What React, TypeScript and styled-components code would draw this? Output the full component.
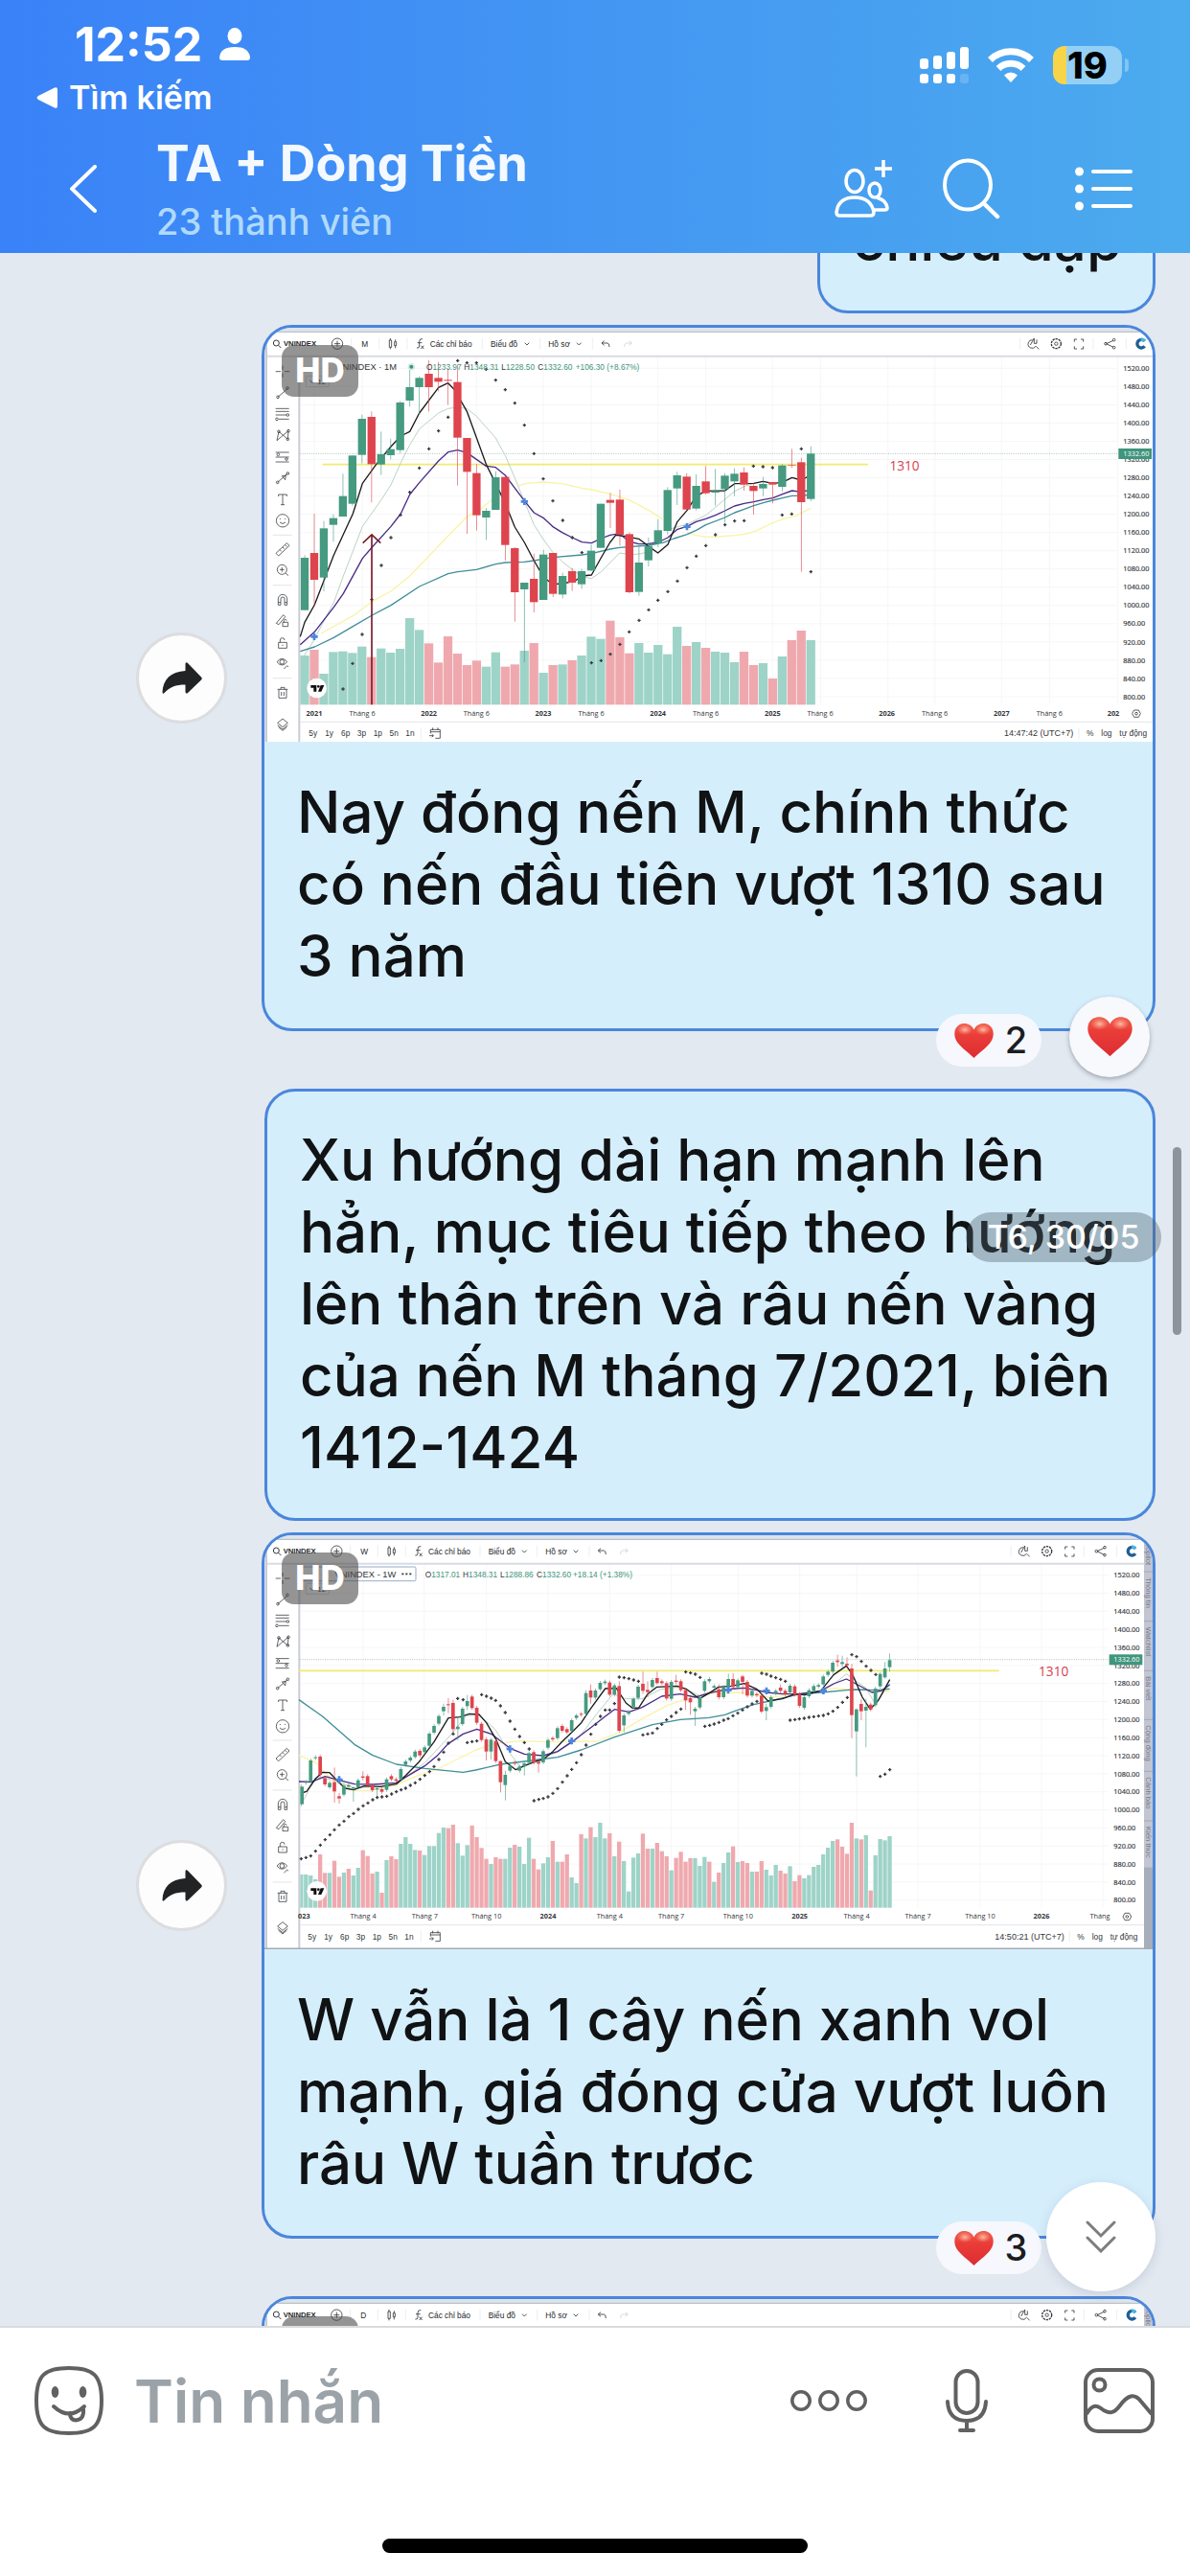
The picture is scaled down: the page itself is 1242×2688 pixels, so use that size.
import React, { useLayoutEffect, useRef } from 'react';
import styled, { createGlobalStyle } from 'styled-components';

const GlobalStyle = createGlobalStyle`
  *, *::before, *::after { box-sizing: border-box; }
  html, body { margin: 0; padding: 0; height: 100%; }
  body { font-family: Inter, "Noto Sans", sans-serif; background: #fff; }
  button { border: 0; padding: 0; margin: 0; background: none; font: inherit; color: inherit; cursor: pointer; display: flex; align-items: center; justify-content: center; }
  svg { display: block; }
`;

/* ---------- shell ---------- */

const Phone = styled.div`
  display: flex;
  flex-direction: column;
  height: 100vh;
  overflow: hidden;
`;

const Header = styled.header`
  flex: none;
  padding: 18px 0 9px;
  color: #fff;
  background: linear-gradient(90deg, #3a82f8 0%, #4498f2 55%, #4cabee 100%);
`;

const StatusBar = styled.div`
  display: flex;
  align-items: flex-start;
  justify-content: space-between;
  padding: 0 64px 0 38px;
`;

const StatusLeft = styled.div`
  display: flex;
  flex-direction: column;
  gap: 8px;
`;

const Clock = styled.div`
  display: flex;
  align-items: center;
  gap: 18px;
  padding-left: 40px;
  font-size: 50px;
  line-height: 56px;
  font-weight: 700;
`;

const BackToApp = styled.a`
  display: flex;
  align-items: center;
  gap: 12px;
  color: #fff;
  text-decoration: none;
  font-size: 34px;
  line-height: 40px;
  font-weight: 600;
`;

const StatusRight = styled.div`
  display: flex;
  align-items: center;
  height: 100px;
  gap: 20px;
`;

const BatteryGroup = styled.div`
  display: flex;
  align-items: center;
  gap: 3px;
`;

const Battery = styled.div`
  width: 72px;
  height: 40px;
  border-radius: 12px;
  background: linear-gradient(90deg, #f7d448 0 20%, #94d0f5 20% 100%);
  color: #000;
  font-size: 38px;
  line-height: 40px;
  font-weight: 800;
  text-align: center;
`;

const BatteryNub = styled.div`
  width: 4px;
  height: 14px;
  border-radius: 0 6px 6px 0;
  background: #82c4f4;
`;

const NavRow = styled.div`
  display: flex;
  align-items: center;
  margin-top: 17px;
  padding: 0 60px 0 73px;
`;

const TitleBlock = styled.div`
  flex: 1;
  min-width: 0;
  display: flex;
  flex-direction: column;
  gap: 4px;
  margin-left: 62px;
`;

const Title = styled.h1`
  margin: 0;
  font-size: 52px;
  line-height: 64px;
  font-weight: 700;
  color: #f3f9ff;
  white-space: nowrap;
`;

const Subtitle = styled.div`
  font-size: 38px;
  line-height: 48px;
  font-weight: 500;
  color: #b0dafc;
`;

const NavButton = styled.button<{ $gap?: number }>`
  margin-left: ${(p) => p.$gap ?? 0}px;
`;

/* ---------- conversation ---------- */

const ChatArea = styled.main`
  position: relative;
  flex: 1;
  min-height: 0;
  background: #e2e9f1;
`;

const Scroller = styled.div`
  height: 100%;
  overflow-y: auto;
  scrollbar-width: none;
  display: flex;
  flex-direction: column;
  &::-webkit-scrollbar { display: none; }
`;

const Row = styled.div<{ $space?: number }>`
  flex: none;
  display: flex;
  align-items: center;
  justify-content: flex-end;
  gap: 36px;
  padding: 0 36px 0 142px;
  margin-bottom: ${(p) => p.$space ?? 12}px;
`;

const ShareButton = styled.button`
  flex: none;
  width: 95px;
  height: 95px;
  border: 3px solid #dcdde0;
  border-radius: 50%;
  background: #fdfdfd;
`;

const Bubble = styled.article<{ $wide?: boolean }>`
  position: relative;
  flex: ${(p) => (p.$wide ? '1 1 0' : '0 1 auto')};
  min-width: 0;
  max-width: ${(p) => (p.$wide ? 'none' : '930px')};
  border: 3px solid #4a86dc;
  border-radius: 32px;
  background: #d5eefc;
`;

const Message = styled.p<{ $caption?: boolean }>`
  margin: 0;
  padding: ${(p) => (p.$caption ? '36px 32px 38px 34px' : '34px 32px 36px 34px')};
  font-size: 60px;
  line-height: 75px;
  font-weight: 500;
  color: #101214;
`;

const Picture = styled.figure`
  position: relative;
  margin: 0;
  overflow: hidden;
  border-radius: 29px 29px 0 0;
  svg { width: 100%; height: auto; }
`;

const HdBadge = styled.span`
  position: absolute;
  left: 18px;
  top: 18px;
  width: 80px;
  height: 54px;
  border-radius: 13px;
  background: rgba(70, 70, 70, 0.58);
  color: #fff;
  font-size: 35px;
  line-height: 52px;
  font-weight: 800;
  text-align: center;
`;

const ReactionPill = styled.button`
  position: absolute;
  right: 116px;
  bottom: -40px;
  width: 110px;
  height: 55px;
  border-radius: 28px;
  background: #f6f8fd;
  gap: 12px;
  padding-left: 4px;
  font-size: 38px;
  line-height: 55px;
  font-weight: 500;
  color: #1b1d1f;
`;

const HeartButton = styled.button`
  position: absolute;
  right: 3px;
  bottom: -51px;
  width: 84px;
  height: 84px;
  border-radius: 50%;
  background: #f8f9fd;
  box-shadow: 0 2px 5px rgba(70, 80, 95, 0.45);
`;

const DatePill = styled.div`
  position: absolute;
  right: 30px;
  top: 1001px;
  width: 204px;
  height: 52px;
  border-radius: 26px;
  background: rgba(80, 95, 105, 0.38);
  color: #fff;
  font-size: 34px;
  line-height: 52px;
  font-weight: 500;
  text-align: center;
`;

const ScrollThumb = styled.div`
  position: absolute;
  right: 9px;
  top: 933px;
  width: 9px;
  height: 196px;
  border-radius: 5px;
  background: #8f949a;
`;

const JumpButton = styled.button`
  position: absolute;
  right: 36px;
  bottom: 36px;
  width: 114px;
  height: 114px;
  border-radius: 50%;
  background: #fff;
  box-shadow: 0 3px 12px rgba(80, 90, 120, 0.18);
`;

/* ---------- composer ---------- */

const Footer = styled.footer`
  flex: none;
  display: flex;
  flex-direction: column;
  align-items: center;
  border-top: 2px solid #d8dce0;
  background: #fff;
  padding: 40px 0 24px;
`;

const Composer = styled.form`
  width: 100%;
  display: flex;
  align-items: center;
  padding: 0 37px 0 36px;
`;

const MessageInput = styled.input`
  flex: 1;
  min-width: 0;
  height: 72px;
  margin: 0 32px;
  padding: 0;
  border: 0;
  outline: 0;
  background: none;
  font-family: inherit;
  font-size: 62px;
  font-weight: 600;
  color: #101214;
  &::placeholder { color: #9ba3a9; opacity: 1; }
`;

const HomeBar = styled.div`
  width: 444px;
  height: 15px;
  margin-top: 108px;
  border-radius: 8px;
  background: #000;
`;

/* ---------- heart ---------- */

const Heart = ({ width }: { width: number }) => (
  <svg width={width} height={(width * 36) / 41} viewBox="0 0 41 36" aria-hidden="true">
    <defs>
      <linearGradient id="heartFill" x1="0" y1="0" x2="0" y2="1">
        <stop offset="0" stopColor="#f0604f" />
        <stop offset="0.35" stopColor="#ea3d38" />
        <stop offset="1" stopColor="#dd2c33" />
      </linearGradient>
      <radialGradient id="heartShine">
        <stop offset="0" stopColor="#ffe1c4" stopOpacity="0.75" />
        <stop offset="1" stopColor="#ffb59a" stopOpacity="0" />
      </radialGradient>
    </defs>
    <path d="M20.5 36C17 32 8 26 3.500 20C-1.500 13 -.5 5 5 1.600C10.500 -1.600 18 .5 20.500 6.500C23 .5 30.500 -1.600 36 1.600C41.500 5 42.500 13 37.500 20C33 26 24 32 20.500 36Z" fill="url(#heartFill)" />
    <ellipse cx="11" cy="6.500" rx="8" ry="5.500" fill="url(#heartShine)" />
    <ellipse cx="30" cy="6.500" rx="8" ry="5.500" fill="url(#heartShine)" />
  </svg>
);

/* ---------- chart data ---------- */

type Candle = [color: 'g' | 'r', top: number, bottom: number, high: number, low: number];

const MONTHLY: Candle[] = [
  ['g', 753, 917, 745, 917], ['r', 738, 822, 615, 905], ['g', 661, 815, 638, 858], ['g', 629, 650, 617, 703],
  ['g', 560, 624, 490, 624], ['g', 433, 584, 433, 590], ['g', 318, 431, 305, 457], ['r', 312, 460, 295, 580],
  ['g', 429, 461, 358, 494], ['g', 413, 432, 380, 445], ['g', 267, 416, 262, 425], ['g', 219, 261, 160, 280],
  ['g', 190, 219, 185, 305], ['r', 177, 219, 135, 295], ['r', 190, 202, 140, 232], ['r', 196, 199, 160, 275],
  ['r', 203, 377, 150, 527], ['r', 378, 484, 378, 678], ['r', 488, 620, 460, 668], ['g', 606, 627, 597, 697],
  ['g', 501, 603, 482, 603], ['r', 500, 713, 500, 762], ['r', 723, 861, 720, 953], ['g', 831, 852, 831, 1080],
  ['r', 819, 892, 740, 924], ['g', 743, 885, 728, 885], ['r', 738, 866, 738, 876], ['g', 810, 868, 800, 880],
  ['r', 795, 831, 785, 857], ['g', 795, 836, 788, 850], ['g', 731, 793, 712, 795], ['g', 584, 722, 584, 722],
  ['r', 572, 581, 550, 660], ['r', 571, 681, 540, 715], ['r', 679, 861, 673, 865], ['g', 768, 860, 718, 872],
  ['g', 716, 761, 690, 780], ['g', 667, 707, 632, 720], ['g', 541, 669, 532, 680], ['g', 495, 536, 484, 588],
  ['r', 499, 602, 488, 602], ['g', 528, 599, 492, 605], ['r', 514, 551, 466, 555], ['g', 544, 549, 475, 590],
  ['g', 496, 538, 488, 643], ['g', 490, 514, 473, 560], ['r', 486, 524, 470, 543], ['r', 528, 544, 520, 618],
  ['g', 522, 536, 500, 560], ['r', 516, 524, 516, 583], ['g', 464, 531, 460, 545], ['r', 462, 464, 412, 472],
  ['r', 454, 579, 440, 797], ['g', 427, 569, 404, 576],
];

const MONTHLY_VOLUME =
  'g1059 r1041 g1116 g1048 g1046 g1051 g1031 r1064 g1037 g1050 g1038 g942 g979 r1021 r1081 r999 r1053 r1089 r1075 g1094 g1049 r1094 r1087 g1044 r1020 g1113 r1089 g1087 r1074 g1059 g1000 g1007 r950 r1002 r1052 g1020 g1050 g1026 g1055 g969 r1029 g1017 r1035 g1047 g1050 g1080 r1047 r1089 g1083 r1131 g1062 r1011 r981 g1011';

const WEEKLY_RAW =
  'g820-875 g805-808 g738-803 g728-731 r726-783 r793-813 g808-822 r806-835/760-870 r850-857/840-873 g817-845 g815-820 g822-826/820-867 g800-822 r788-792/772-800 r787-816 r816-831 g825-829/820-852 r828-836 g797-830 r787-797 r797-802 g765-797 g741-752 g729-738 g710-727 r708-722 g697-712 g654-692 g630-651 g599-623 g570-584/560-598 r562-565/543-590 r558-640/548-655 g632-640/600-675 g576-624 g552-568/533-580 r538-574 r573-620 r623-674 r672-710/665-738 g673-710/668-735 r677-740 r740-806/738-838 g783-815/770-863 g755-770 r745-748 g757-770 g747-757/740-785 g715-745 r712-745 r742-748/738-776 g709-744 g674-698 r668-672 g637-668 r630-645 r640-650 g612-646 g597-605 r592-595 g527-592/518-600 r519-541/500-560 g519-541 g495-515 g491-496 r494-532 g503-532 r505-645/490-650 g597-628/590-650 g586-592 g545-570 g507-542 r498-520/460-530 r517-524/490-540 g486-508 r480-496/460-500 r490-496 r496-544 g492-545 r488-492/470-500 r490-518 r518-550/510-580 r543-556/538-595 g576-584/570-630 g540-572 g490-520 g483-490 g505-510 r515-540/500-547 g508-540 g483-510/466-515 r483-508/465-515 g487-508 r475-492/470-530 r492-535 g520-535 r530-534 r535-585 g571-583/560-612 g540-570 g520-528 r510-520/500-530 r520-530 g504-525 r506-532 r530-567 g540-573 g518-537 g505-520 g502-507 g475-500 g460-470 g432-460 r425-430/407-445 g430-436/410-450 r435-440/415-448 r450-596/435-668 g578-647/575-788 r561-584/545-612 g570-582/545-697 r563-578 g513-565 g467-506 g450-478/430-482 g424-446/403-460';

const WEEKLY: Candle[] = WEEKLY_RAW.split(' ').map((token) => {
  const [body, wick] = token.slice(1).split('/');
  const [top, bottom] = body.split('-').map(Number);
  const [high, low] = wick ? wick.split('-').map(Number) : [top - 6, bottom + 6];
  return [token[0] as 'g' | 'r', top, bottom, high, low];
});

const WEEKLY_VOLUME =
  'g1095 g1095 g1098 g1110 r1032 r1090 g1090 r1052 r1102 g1089 r1077 g1098 g1074 r1019 r1037 r1092 g1086 r1152 g1050 r1038 r1047 g999 g978 g999 g1018 r1020 g1034 g1006 g1006 g965 g948 r950 r939 g997 g1036 g1003 r942 r978 r1012 r1046 g1062 r1041 r1046 g1046 g1011 r1002 g1008 g1062 g980 r1046 r1079 g1060 g1041 r990 g1055 r1055 r1032 g1104 g1122 r969 g982 r947 g978 g933 g982 r966 g1038 r992 g1053 g1148 g1042 g1029 r967 r1014 g1014 r996 r1022 r1038 g1082 r1043 r1024 r1055 r1044 g1044 g1068 g1040 r1055 g1118 r1089 g1059 g1026 r1007 g1056 r1053 r1059 g1086 r1086 r1053 g1080 g1098 g1065 r1083 r1092 g1069 r1116 r1097 g1107 g1097 g1071 g1065 g1032 g1011 g990 r985 r1008 r1030 r933 g982 r985 g972 r1145 g1035 g984 g988 g975';

interface ChartSpec {
  interval: string;
  loading?: boolean;
  x0: number;
  step: number;
  bodyWidth: number;
  candles: Candle[];
  volume: string;
  base: number;
  gridX: number[];
  dates: [number, string][];
  priceX: number;
  priceTop: number;
  priceStep: number;
  lastY: number;
  levelY: number;
  levelFrom: number;
  levelTo: number;
  noteX: number;
  lines: [color: string, width: number, points: string][];
  dots: string[];
  crosses: [number, number][];
  ohlc: [string, string][];
  change: string;
  clock: string;
  side: boolean;
}

const monthly: ChartSpec = {
  interval: 'M', x0: 144, step: 29.9, bodyWidth: 25, candles: MONTHLY, volume: MONTHLY_VOLUME, base: 1213,
  gridX: [174, 324, 532, 682, 891, 1041, 1250, 1400, 1609, 1759, 1970, 2117, 2326, 2476, 2690],
  dates: [[174, '2021'], [324, 'Tháng 6'], [533, '2022'], [682, 'Tháng 6'], [891, '2023'], [1041, 'Tháng 6'], [1250, '2024'], [1400, 'Tháng 6'], [1609, '2025'], [1758, 'Tháng 6'], [1967, '2026'], [2117, 'Tháng 6'], [2326, '2027'], [2476, 'Tháng 6'], [2676, '202']],
  priceX: 2707, priceTop: 160, priceStep: 57.1, lastY: 427, levelY: 461, levelFrom: 200, levelTo: 1908, noteX: 2022,
  lines: [
    ['#b9d3c4', 3, '135,1070 165,1025 235,893 265,810 325,655 385,570 414,525 445,455 473,400 503,350 533,325 563,300 593,286 623,282 652,286 682,310 742,378 772,433 802,503 832,577 862,650 891,695 920,735 950,765 985,792 1012,812 1042,818 1072,797 1130,738 1170,743 1200,740 1225,730'],
    ['#b9d3c4', 3, '1281,665 1341,648 1400,620 1430,595 1460,570 1490,545 1520,530 1550,520'],
    ['#faf3a6', 4, '195,990 295,935 355,890 414,858 473,810 533,748 593,685 652,625 690,605 732,570'],
    ['#faf3a6', 4, '812,527 840,520 891,516 950,521 1012,535 1042,540 1100,553 1160,572 1222,605 1265,632'],
    ['#faf3a6', 4, '1341,674 1370,683 1400,688 1440,687 1490,683 1530,678 1560,668 1600,648 1640,632 1680,622 1729,598'],
    ['#3f8f98', 4, '130,1046 175,1032 235,1003 295,968 355,933 414,902 503,843 593,803 623,797 682,790 742,773 772,768 832,766 862,762 920,752 1012,744 1042,740 1100,726 1130,721 1222,714 1265,706 1300,693 1341,680 1370,667 1400,650 1460,627 1490,612 1520,601 1550,590 1580,581 1610,573 1640,566 1670,559 1700,559 1729,555'],
    ['#4a2b86', 4, '130,1025 175,985 235,908 265,865 325,755 355,720 414,655 445,615 473,555 503,518 563,450 593,422 623,416 652,424 712,466 742,470 772,495 832,575 862,612 891,628 920,655 950,674 982,690 1012,704 1042,707 1072,693 1100,682 1118,679 1140,686 1160,702 1190,710 1222,709 1250,705 1281,690 1311,664 1341,655 1370,640 1400,631 1430,620 1460,606 1490,591 1520,583 1550,578 1580,571 1610,566 1640,554 1670,543 1699,547 1729,540'],
    ['#1c1c1f', 4, '130,1000 144,955 175,900 235,745 295,615 325,520 370,458 414,405 445,372 473,358 503,300 563,220 593,206 614,228 652,295 712,460 742,520 775,590 802,657 832,705 862,762 891,812 920,836 950,834 990,826 1012,810 1042,807 1072,753 1100,705 1118,682 1145,685 1190,694 1222,718 1250,738 1281,712 1311,640 1341,605 1370,560 1400,544 1460,543 1490,521 1550,520 1579,514 1610,520 1639,517 1670,502 1699,510 1729,494'],
  ],
  dots: ['264,1164 294,1084 324,993 354,884 384,777 414,690 444,619 473,548 503,472 533,412 563,356 593,313 623,136 652,143 682,143 712,163 742,197 772,227 802,269 832,338 862,427 891,506 921,575 952,636 982,690 1012,737 1042,1082 1072,1075 1101,1055 1131,1024 1160,985 1191,949 1221,916 1250,886 1281,859 1311,826 1341,784 1370,748 1400,715 1430,681 1460,650 1490,638 1520,637 1549,466 1579,468 1609,471 1639,619 1669,616 1699,412 1729,797'],
  crosses: [[174, 1000], [832, 577], [1341, 656]],
  ohlc: [['O', '1233.97'], ['H', '1348.31'], ['L', '1228.50'], ['C', '1332.60']],
  change: '+106.30 (+8.67%)', clock: '14:47:42 (UTC+7)', side: false,
};

const weekly: ChartSpec = {
  interval: 'W', x0: 133, step: 14.86, bodyWidth: 11, candles: WEEKLY, volume: WEEKLY_VOLUME, base: 1199,
  gridX: [327, 518, 713, 906, 1099, 1292, 1501, 1694, 1872, 2064, 2259, 2451, 2643],
  dates: [[142, '023'], [327, 'Tháng 4'], [520, 'Tháng 7'], [713, 'Tháng 10'], [906, '2024'], [1099, 'Tháng 4'], [1292, 'Tháng 7'], [1501, 'Tháng 10'], [1694, '2025'], [1872, 'Tháng 4'], [2064, 'Tháng 7'], [2259, 'Tháng 10'], [2451, '2026'], [2634, 'Tháng']],
  priceX: 2677, priceTop: 158, priceStep: 56.5, lastY: 422, levelY: 457, levelFrom: 126, levelTo: 2318, noteX: 2489,
  lines: [
    ['#b9d3c4', 3, '133,875 180,790 240,800 300,825 430,815 520,745 600,660 650,598 690,595 740,640 790,720 820,760 870,735 930,715 1000,670 1060,590 1110,530 1150,545 1200,545 1260,515 1320,508 1380,535 1411,525 1500,510'],
    ['#b9d3c4', 3, '1760,520 1800,500 1840,467 1900,510 1930,560 1976,500'],
    ['#faf3a6', 4, '126,722 180,745 230,800 300,832 350,833 430,815 500,785 560,765 620,735 680,705 740,685 820,677 900,680 1060,678 1130,650 1200,608 1280,565 1340,545 1400,530 1500,525 1600,540 1700,530 1800,512 1976,522'],
    ['#3f8f98', 4, '126,548 200,600 300,688 357,722 431,750 520,763 640,775 680,768 757,750 832,741 936,728 1010,705 1114,665 1160,650 1233,626 1320,610 1410,604 1460,595 1500,580 1550,563 1600,552 1660,538 1695,530 1765,525 1840,518 1870,516 1930,518 1976,514'],
    ['#4a2b86', 4, '126,804 165,805 208,788 252,800 300,812 360,813 431,808 460,790 520,755 560,722 594,685 640,655 683,640 728,655 787,700 832,718 891,723 936,710 980,680 1040,635 1085,600 1114,578 1160,586 1200,572 1262,537 1320,530 1367,540 1411,527 1470,515 1520,511 1560,518 1590,525 1640,530 1690,530 1760,520 1800,498 1840,483 1870,498 1920,525 1950,520 1976,500'],
    ['#1c1c1f', 4, '133,840 150,835 178,795 200,775 222,776 245,800 270,825 297,830 330,818 380,820 431,812 460,785 500,745 549,680 594,605 630,602 660,592 690,594 713,620 742,670 772,742 805,767 832,755 870,740 891,735 921,710 951,678 980,650 1010,620 1040,575 1085,513 1120,512 1150,558 1170,574 1190,573 1218,530 1247,508 1310,505 1340,515 1380,545 1411,527 1440,508 1480,505 1520,497 1560,515 1595,552 1640,545 1680,530 1710,533 1760,520 1800,470 1840,442 1860,470 1890,540 1915,578 1940,550 1976,485'],
  ],
  dots: [
    '133,1046 148,1042 163,1037 178,1022 193,1003 208,986 223,971 237,955 252,940 267,928 282,914 297,904 312,891 327,880 342,871 357,861 371,854 386,852 401,850 416,843 431,836 446,830 460,825 475,816 490,808 505,797 520,785 535,773 549,757 564,735 579,712 594,684 609,655',
    '623,544 640,548 653,682 668,679 683,677',
    '698,532 713,537 728,543 742,550 757,567 772,588 787,615 802,640 817,663 832,682 847,702',
    '862,864 877,860 891,857 906,852 921,841 936,826 951,806 966,786 980,766 995,745 1010,720 1025,690 1040,656 1055,625 1070,600 1085,580 1099,580 1114,560',
    '1129,477 1144,479 1159,482 1174,486 1189,490',
    '1203,658 1218,655 1233,652 1248,638 1262,625 1277,611 1292,600 1307,588 1322,577 1337,461 1352,464 1367,468 1382,478',
    '1397,631 1412,628 1426,624 1441,619 1456,612 1470,607 1485,598 1500,590 1515,580 1530,570 1545,561 1560,553',
    '1575,465 1590,468 1604,474 1619,479 1634,484 1649,490',
    '1664,612 1679,610 1693,608 1708,606 1723,603 1738,601 1753,599 1768,597 1783,592 1798,584 1813,572 1828,556 1843,541',
    '1857,407 1872,413 1887,428 1902,443 1917,456 1932,469 1946,788 1961,781 1976,767',
  ],
  crosses: [[252, 798], [787, 702], [980, 677], [1470, 518], [1590, 520], [1768, 520]],
  ohlc: [['O', '1317.01'], ['H', '1348.31'], ['L', '1288.86'], ['C', '1332.60']],
  change: '+18.14 (+1.38%)', clock: '14:50:21 (UTC+7)', side: true,
};

const daily: ChartSpec = { ...weekly, interval: 'D', loading: true };

const UI = '"Liberation Sans", Arial, sans-serif';
const AXIS = '"Open Sans", "Noto Sans", sans-serif';
const INK = '#33363b';

/* ---------- chart drawing ---------- */

const TOOLS: [number, string][] = [
  [170, 'M-22 0H-6M6 0H22M0 -18V-6M0 6V18'],
  [237, 'M-15 13L15 -13M-19 13a4 4 0 1 0 8 0a4 4 0 1 0 -8 0M11 -15a4 4 0 1 0 8 0a4 4 0 1 0 -8 0'],
  [303, 'M-22 -17H20M-22 -8H20M-22 3H12M-12 16H20M12 3a4 4 0 1 0 8 0a4 4 0 1 0 -8 0M-22 16a4 4 0 1 0 8 0a4 4 0 1 0 -8 0'],
  [370, 'M-18 16L-12 -12L16 12L18 -14L-4 4L-18 16M-16 -12a4 4 0 1 0 8 0a4 4 0 1 0 -8 0M12 12a4 4 0 1 0 8 0a4 4 0 1 0 -8 0M14 -14a4 4 0 1 0 8 0a4 4 0 1 0 -8 0'],
  [438, 'M-22 -15H20M-22 0H20M-22 15H20M-18 -8a4 4 0 1 0 8 0a4 4 0 1 0 -8 0M8 6a4 4 0 1 0 8 0a4 4 0 1 0 -8 0'],
  [503, 'M-16 14L16 -14M-20 14a4 4 0 1 0 8 0a4 4 0 1 0 -8 0M12 -14a4 4 0 1 0 8 0a4 4 0 1 0 -8 0M-2 -6L8 6L10 -8Z'],
  [571, 'M-13 -10V-16H13V-10M0 -16V16M-6 16H6'],
  [637, 'M-20 0a20 20 0 1 0 40 0a20 20 0 1 0 -40 0M-8 -4v-3M8 -4v-3M-9 5Q0 14 9 5'],
  [727, 'M-21 12L13 -20L21 -12L-13 20ZM-9 1l5 5M0 -7l5 5M8 -14l5 5'],
  [792, 'M-17 -2a15 15 0 1 0 30 0a15 15 0 1 0 -30 0M9 9L18 17M-2 -9V5M-9 -2H5'],
  [885, 'M-14 16V-3a14 14 0 0 1 28 0V16H6V-3a6 6 0 0 0 -12 0V16ZM-14 8H-6M6 8H14'],
  [950, 'M-20 8L2 -18L8 -12L-12 12ZM0 5H17V18H0ZM4 5V0a4 4 0 0 1 8 0'],
  [1020, 'M-13 -2H13V16H-13ZM-8 -2V-9a7 7 0 0 1 14 0M0 5v4'],
  [1083, 'M-18 -4Q-2 -24 14 -4Q-2 16 -18 -4M-9 -4a7 7 0 1 0 14 0a7 7 0 1 0 -14 0M4 18L14 8L18 12'],
  [1176, 'M-16 -11H16M-6 -11V-17H6V-11M-12 -11V16H12V-11M-4 -3V9M4 -3V9'],
  [1275, 'M-16 -5L0 -18L16 -5L0 8ZM-16 2L0 15L16 2M-13 8L0 19L13 8'],
];

const SIDE_LABELS: [number, string][] = [
  [55, 'Copilot'], [165, 'Thông tin'], [320, 'Watchlist'], [475, 'Bài viết'], [628, 'Cộng đồng'], [790, 'Cảnh báo'], [945, 'Kiến thức'],
];

const ToolIcon = ({ d, y }: { d: string; y: number }) => (
  <path d={d} transform={`translate(75 ${y})`} fill="none" stroke="#3a3d42" strokeWidth="2.4" />
);

const Chevron = ({ x }: { x: number }) => <path d={`M${x} 80l7 7l7 -7`} fill="none" stroke={INK} strokeWidth="2.500" />;

function TopBar({ spec, shift }: { spec: ChartSpec; shift: number }) {
  const at = (x: number) => Math.round(x * (spec.side ? 0.99 : 1));
  return (
    <g>
      <g fill="none" stroke={INK} strokeWidth="3">
        <circle cx="55" cy="81" r="9" />
        <path d="M62 88L70 96" />
        <circle cx={at(246)} cy="83" r="17" strokeWidth="2.500" />
        <path d={`M${at(246) - 9} 83h18M${at(246)} 74v18`} strokeWidth="2.500" />
        <path d={`M${at(409)} 72h7v22h-7zM${at(409) + 3} 66v6M${at(409) + 3} 94v6M${at(425)} 77h6v12h-6zM${at(425) + 3} 70v7M${at(425) + 3} 89v8`} strokeWidth="2.500" />
        <path d={`M${at(513)} 68q-10 -2 -10 8v14q0 8 -8 6M${at(497)} 80h14M${at(508)} 89l9 10m0 -10l-9 10`} strokeWidth="2.500" />
        <path d={`M${at(1082)} 74l-8 7l8 7M${at(1074)} 81h18q6 0 6 12`} strokeWidth="2.500" />
        <path d={`M${at(1160)} 74l8 7l-8 7M${at(1168)} 81h-17q-6 0 -6 12`} strokeWidth="2.500" stroke="#cfd2d6" />
      </g>
      <g fontFamily={UI} fontSize="25" fill="#25282d">
        <text x={at(78)} y="91" fontWeight="700" fontSize="23">VNINDEX</text>
        <text x={at(322)} y="92">{spec.interval}</text>
        <text x={at(536)} y="92">Các chỉ báo</text>
        <text x={at(726)} y="92">Biểu đồ</text>
        <text x={at(907)} y="92">Hồ sơ</text>
      </g>
      <Chevron x={at(833)} />
      <Chevron x={at(996)} />
      <path d={[290, 377, 465, 700, 881, 1045].map((x) => `M${at(x)} 65v36`).join('')} stroke="#e3e5ea" strokeWidth="2" />
      <g transform={`translate(${shift} 0)`} fill="none" stroke={INK} strokeWidth="2.500">
        <path d="M2423 71a13 13 0 1 0 10 20M2416 87L2428 66V82H2436V70M2434 91l9 9" />
        <circle cx="2497" cy="83" r="15" strokeWidth="4" strokeDasharray="7 2.500" />
        <circle cx="2497" cy="83" r="5" />
        <path d="M2554 77v-8h8M2574 69h8v8M2582 91v8h-8M2562 99h-8v-8" />
        <path d="M2676 73L2654 83L2676 94" />
        <circle cx="2678" cy="71" r="4" />
        <circle cx="2652" cy="83" r="4" />
        <circle cx="2678" cy="95" r="4" />
        <path d="M2384 65v36M2613 65v36M2716 65v36" stroke="#e3e5ea" strokeWidth="2" />
        <path d="M2774 75a13 13 0 1 0 0 16" stroke="#1f5f96" strokeWidth="10" />
        <path d="M2774 75a13 13 0 0 0 -12 -5" stroke="#45b7de" strokeWidth="10" />
      </g>
    </g>
  );
}

function ChartBody({ spec, shift, lift, rightEdge }: { spec: ChartSpec; shift: number; lift: number; rightEdge: number }) {
  return (
    <g>
      {/* grid */}
      <g stroke="#f1f2f4" strokeWidth="2">
        {spec.gridX.map((x) => <path key={x} d={`M${x} 126V${spec.base}`} />)}
        {Array.from({ length: 19 }, (_, k) => (
          <path key={k} d={`M130 ${spec.priceTop + k * spec.priceStep}H${2690 + shift}`} />
        ))}
      </g>

      {/* volume */}
      {spec.volume.split(' ').map((v, i) => {
        const top = Number(v.slice(1));
        const left = Math.max(130, spec.x0 + i * spec.step - spec.step / 2 + 1);
        const right = spec.x0 + i * spec.step + spec.step / 2 - 1;
        return <rect key={i} x={left} y={top} width={right - left} height={spec.base - top} fill={v[0] === 'g' ? '#9ed3c8' : '#efa9ae'} />;
      })}

      <path d={`M130 ${spec.lastY}H${2690 + shift}`} stroke="#7fa79d" strokeWidth="2" strokeDasharray="3 4" />
      <path d={`M${spec.levelFrom} ${spec.levelY}H${spec.levelTo}`} stroke="#f1ea72" strokeWidth="5" />

      {/* moving averages */}
      {spec.lines.map(([color, width, points], i) => (
        <polyline key={i} points={points} fill="none" stroke={color} strokeWidth={width} strokeLinejoin="round" />
      ))}

      {/* candles */}
      {spec.candles.map(([color, top, bottom, high, low], i) => {
        const x = spec.x0 + i * spec.step;
        return (
          <g key={i} fill={color === 'g' ? '#459a80' : '#de444d'}>
            <rect x={x - 1} y={high} width="2.400" height={low - high} opacity="0.75" />
            <rect x={Math.max(130, x - spec.bodyWidth / 2)} y={top} width={spec.bodyWidth} height={bottom - top} />
          </g>
        );
      })}

      {/* parabolic dots */}
      {spec.dots.flatMap((run, r) => run.split(' ').map((p, i) => {
        const [x, y] = p.split(',').map(Number);
        return <path key={`${r}-${i}`} d={`M${x - 5} ${y}h10M${x} ${y - 5}v10`} stroke="#3b3b42" strokeWidth="4" />;
      }))}
      {spec.crosses.map(([x, y]) => (
        <path key={x} d={`M${x - 11} ${y}h22M${x} ${y - 11}v22`} stroke="#4c86dd" strokeWidth="8" />
      ))}

      {!spec.side && (
        <path d="M354 1213V682M326 707L354 681L382 707" fill="none" stroke="#7b1d2b" strokeWidth="5" />
      )}

      <text x={spec.noteX} y={spec.levelY + 18} fontFamily={AXIS} fontSize="41" fill="#d6404e" textAnchor="middle">1310</text>

      {/* price axis */}
      <g fontFamily={AXIS} fontSize="22" fill={INK} stroke={INK} strokeWidth="0.500">
        {Array.from({ length: 19 }, (_, k) => (
          <text key={k} x={spec.priceX} y={spec.priceTop + k * spec.priceStep + 8}>{`${1520 - k * 40}.00`}</text>
        ))}
      </g>
      <rect x={2692 + shift} y={spec.lastY - 16} width="104" height="33" fill="#3f957d" />
      <text x={spec.priceX} y={spec.lastY + 8} fontFamily={AXIS} fontSize="22" fill="#fff">1332.60</text>

      {/* time axis */}
      <g fontFamily={AXIS} fontSize="22" fill={INK} textAnchor="middle">
        {spec.dates.map(([x, label]) => (
          <text key={x} x={x} y={1248 + lift} fontWeight={label.startsWith('T') ? 500 : 700}>{label}</text>
        ))}
      </g>
      <g transform={`translate(${2748 + shift} ${1241 + lift})`} fill="none" stroke={INK} strokeWidth="2.400">
        <path d="M-13 0L-7 -11H7L13 0L7 11H-7Z" />
        <circle r="4" />
      </g>

      {/* range bar */}
      <path d={`M130 ${1267 + lift}H${rightEdge}`} stroke="#e3e5ea" strokeWidth="3" />
      <g fontFamily={UI} fontSize="25" fill={INK}>
        {['5y', '1y', '6p', '3p', '1p', '5n', '1n'].map((t, i) => (
          <text key={t} x={157 + i * 50.5 + shift / 10} y={1312 + lift}>{t}</text>
        ))}
        <text x={2551 + shift} y={1312 + lift} textAnchor="end" fontSize="27">{spec.clock}</text>
        <text x={2592 + shift} y={1312 + lift}>%</text>
        <text x={2638 + shift} y={1312 + lift}>log</text>
        <text x={2695 + shift} y={1312 + lift}>tự động</text>
      </g>
      <path d={`M538 ${1303 + lift}V${1291 + lift}H568V${1318 + lift}H553M545 ${1285 + lift}v8M561 ${1285 + lift}v8M538 ${1298 + lift}h30M534 ${1310 + lift}h13m-5 -5l5 5l-5 5`} fill="none" stroke={INK} strokeWidth="2.400" />
      <path d={`M${2568 + shift} ${1285 + lift}v36M508 ${1285 + lift}v36`} stroke="#e3e5ea" strokeWidth="2" />

      {/* drawing tools */}
      {TOOLS.map(([y, d]) => <ToolIcon key={y} y={spec.side ? Math.round(y * 0.99) : y} d={d} />)}
      {[682, 839, 1130].map((y) => (
        <path key={y} d={`M44 ${spec.side ? Math.round(y * 0.99) : y}H104`} stroke="#dcdfe5" strokeWidth="2.500" />
      ))}

      {/* platform mark */}
      <circle cx="182" cy={1161 + lift} r="31" fill="#fff" />
      <path d={`M163 ${1152 + lift}h18v20h-9v-12h-9zM194 ${1152 + lift}h11l-9 20h-10z`} fill="#111" />
      <circle cx="187" cy={1156 + lift} r="4" fill="#111" />

      {/* symbol legend */}
      <text x={spec.side ? 430 : 432} y="164" textAnchor="end" fontFamily={UI} fontSize="28" fill={INK}>{`VNINDEX ${spec.side ? '-' : '·'} 1${spec.interval}`}</text>
      {spec.side
        ? <><rect x="134" y="132" width="358" height="44" rx="4" fill="none" stroke="#7f9cc0" strokeWidth="2.500" /><path d="M448 154h32" stroke={INK} strokeWidth="5" strokeDasharray="6 6" /></>
        : <><circle cx="478" cy="155" r="11" fill="#d4ebe4" /><circle cx="478" cy="155" r="6" fill="#3f957d" /></>}
      <text y="164" fontFamily={UI} fontSize="25" fill="#3f957d">
        {spec.ohlc.map(([k, v], i) => (
          <React.Fragment key={k}>
            <tspan x={(spec.side ? 521 : 525) + [0, 118, 235, 349][i]} fill={INK}>{k}</tspan>
            <tspan>{v}</tspan>
          </React.Fragment>
        ))}
        <tspan x={spec.side ? 984 : 992}>{spec.change}</tspan>
      </text>
      <rect x="148" y="184" width="72" height="34" rx="4" fill="none" stroke="#ccd0d6" strokeWidth="2.500" />
      <path d="M160 198l8 7l8 -7" fill="none" stroke={INK} strokeWidth="2.500" />
      <text x="184" y="210" fontFamily={UI} fontSize="24" fill={INK}>12</text>
    </g>
  );
}

function ChartPicture({ spec }: { spec: ChartSpec }) {
  const shift = spec.side ? -29 : 0;
  const lift = spec.side ? -14 : 0;
  const rightEdge = spec.side ? 2772 : 2799;
  const sideLabels = spec.loading ? SIDE_LABELS.slice(0, 1) : SIDE_LABELS;

  return (
    <svg viewBox="18 33 2781 1296" role="img" aria-label={`Biểu đồ VNINDEX ${spec.interval}`}>
      <rect x="18" y="33" width="2781" height="1296" fill="#dde4ec" />
      <rect x="27" y="47" width={rightEdge - 27} height="1282" fill="#fff" />
      <path d="M18 46H2799" stroke="#b3b8bf" strokeWidth="3" />
      <path d="M24 46V1329M127 122V1329" stroke="#c9ccd6" strokeWidth="6" />
      <path d={`M27 122H${rightEdge}`} stroke="#d9dbe3" strokeWidth="6" />

      <TopBar spec={spec} shift={shift} />
      {!spec.loading && <ChartBody spec={spec} shift={shift} lift={lift} rightEdge={rightEdge} />}

      {spec.side && (
        <g>
          <rect x="2772" y="47" width="27" height="1282" fill="#a6adbb" />
          <rect x="2772" y="47" width="27" height="1026" fill="#c2c5d2" />
          {sideLabels.map(([y, label]) => (
            <g key={label}>
              <text transform={`translate(2779 ${y}) rotate(90)`} fontFamily={UI} fontSize="23" fill="#777c8e">{label}</text>
              <path d={`M2772 ${y - 18}H2799`} stroke="#9da2b2" strokeWidth="2.500" />
            </g>
          ))}
          <path d="M18 1327H2799" stroke="#a6abb3" strokeWidth="5" />
        </g>
      )}
    </svg>
  );
}

/* ---------- icons ---------- */

const ShareArrow = () => (
  <svg width="44" height="34" viewBox="0 0 44 34" aria-hidden="true">
    <path d="M25.500 1.500V9C10 10 2 18 1.500 31.500Q1.700 33.500 3.500 32C9 26 15 23.500 25.500 23.500V31Q26 33.500 28 32L42 18.500Q43.500 17 42 15.500L28 1Q26 -.5 25.500 1.500Z" fill="#222325" />
  </svg>
);

const SignalIcon = () => (
  <svg width="51" height="38" viewBox="0 0 51 38" fill="#fff" aria-hidden="true">
    <rect x="0" y="12" width="9" height="11" rx="3" />
    <rect x="14" y="9" width="9" height="14" rx="3" />
    <rect x="28" y="5" width="9" height="18" rx="3" />
    <rect x="42" y="0" width="9" height="23" rx="3" />
    <rect x="0" y="28" width="9" height="10" rx="3" />
    <rect x="14" y="28" width="9" height="10" rx="3" />
    <rect x="28" y="28" width="9" height="10" rx="3" />
    <rect x="42" y="28" width="9" height="10" rx="3" opacity="0.18" />
  </svg>
);

const WifiIcon = () => (
  <svg width="48" height="36" viewBox="0 0 48 36" aria-hidden="true">
    <g fill="none" stroke="#fff" strokeWidth="7">
      <path d="M2.500 12.500A31 31 0 0 1 45.500 12.500" />
      <path d="M11 21.500A19 19 0 0 1 37 21.500" />
    </g>
    <path d="M17 28.500Q24 22.500 31 28.500L24 36Z" fill="#fff" />
  </svg>
);

const AddMemberIcon = () => (
  <svg width="60" height="60" viewBox="0 0 60 60" fill="none" stroke="#fff" strokeWidth="3.500" strokeLinecap="round" strokeLinejoin="round" aria-hidden="true">
    <ellipse cx="21" cy="22" rx="9" ry="11.500" />
    <path d="M2 54.500Q4 39 21 39Q38 39 41 54.500Q41 58 37.500 58H5.500Q2 58 2 54.500Z" />
    <ellipse cx="42" cy="31.500" rx="6" ry="7.500" />
    <path d="M45 39.500Q54 42 55 50Q55 52 52.500 52H41" />
    <path d="M51 0V18M42 9H60" strokeLinecap="butt" />
  </svg>
);

const SearchIcon = () => (
  <svg width="60" height="64" viewBox="0 0 60 64" fill="none" stroke="#fff" strokeLinecap="round" aria-hidden="true">
    <ellipse cx="26" cy="28" rx="24" ry="25.500" strokeWidth="4" />
    <path d="M42.500 47L57 61" strokeWidth="4.500" />
  </svg>
);

const ListIcon = () => (
  <svg width="60" height="46" viewBox="0 0 60 46" aria-hidden="true">
    {[5, 23, 41].map((y) => (
      <g key={y}>
        <circle cx="4.500" cy={y} r="4.500" fill="#fff" />
        <path d={`M19 ${y}H58`} stroke="#fff" strokeWidth="4" strokeLinecap="round" />
      </g>
    ))}
  </svg>
);

const StickerIcon = () => (
  <svg width="72" height="72" viewBox="0 0 72 72" fill="none" stroke="#616161" strokeWidth="4" strokeLinecap="round" aria-hidden="true">
    <path d="M36 2C61 2 70 9 70 36C70 63 61 70 36 70C11 70 2 63 2 36C2 9 11 2 36 2Z" />
    <ellipse cx="21.500" cy="27" rx="3.800" ry="6" fill="#616161" stroke="none" />
    <ellipse cx="50.500" cy="27" rx="3.800" ry="6" fill="#616161" stroke="none" />
    <path d="M20 42Q36 57 52 42" />
    <path d="M37 49Q37 56 43 56.500Q52 56 51 45" />
  </svg>
);

const DotsIcon = () => (
  <svg width="80" height="24" viewBox="0 0 80 24" fill="none" stroke="#616161" strokeWidth="3.500" aria-hidden="true">
    <circle cx="11" cy="12" r="9.200" />
    <circle cx="40" cy="12" r="9.200" />
    <circle cx="69" cy="12" r="9.200" />
  </svg>
);

const MicIcon = () => (
  <svg width="44" height="66" viewBox="0 0 44 66" fill="none" stroke="#616161" strokeWidth="4" strokeLinecap="round" aria-hidden="true">
    <rect x="10.500" y="2" width="23" height="44" rx="11.500" />
    <path d="M2 34Q3 54 22 54Q41 54 42 34M22 54V63M15 64H29" />
  </svg>
);

const PhotoIcon = () => (
  <svg width="74" height="68" viewBox="0 0 74 68" fill="none" stroke="#616161" strokeWidth="4" strokeLinejoin="round" aria-hidden="true">
    <rect x="2" y="2" width="70" height="64" rx="13" />
    <circle cx="16.500" cy="17.500" r="6" />
    <path d="M3 48C8 39 13 38 18 42C27 49 32 47 38 39C46 28 53 26 60 35L71 48" />
  </svg>
);

/* ---------- app ---------- */

export default function App() {
  const scroller = useRef<HTMLDivElement>(null);

  useLayoutEffect(() => {
    if (scroller.current) scroller.current.scrollTop = 88;
  }, []);

  return (
    <Phone>
      <GlobalStyle />
      <Header>
        <StatusBar>
          <StatusLeft>
            <Clock>
              12:52
              <svg width="32" height="34" viewBox="0 0 32 34" fill="#fff" aria-hidden="true">
                <ellipse cx="16" cy="8.500" rx="7.500" ry="8.500" />
                <path d="M0 31Q1 20 16 20Q31 20 32 31Q32 34 29 34H3Q0 34 0 31Z" />
              </svg>
            </Clock>
            <BackToApp href="#search">
              <svg width="22" height="22" viewBox="0 0 22 22" fill="#fff" aria-hidden="true">
                <path d="M19 .6Q22 -.5 22 2.500V19.500Q22 22.500 19 21.400L2 13Q-.8 11 2 9Z" />
              </svg>
              Tìm kiếm
            </BackToApp>
          </StatusLeft>
          <StatusRight>
            <SignalIcon />
            <WifiIcon />
            <BatteryGroup>
              <Battery>19</Battery>
              <BatteryNub />
            </BatteryGroup>
          </StatusRight>
        </StatusBar>
        <NavRow>
          <NavButton aria-label="Quay lại">
            <svg width="28" height="50" viewBox="0 0 28 50" fill="none" stroke="#fff" strokeWidth="4" strokeLinecap="round" aria-hidden="true">
              <path d="M26 2L2 25L26 48" />
            </svg>
          </NavButton>
          <TitleBlock>
            <Title>TA + Dòng Tiền</Title>
            <Subtitle>23 thành viên</Subtitle>
          </TitleBlock>
          <NavButton aria-label="Thêm thành viên"><AddMemberIcon /></NavButton>
          <NavButton aria-label="Tìm kiếm" $gap={53}><SearchIcon /></NavButton>
          <NavButton aria-label="Tùy chọn" $gap={78}><ListIcon /></NavButton>
        </NavRow>
      </Header>

      <ChatArea>
        <Scroller ref={scroller}>
          <Row>
            <Bubble><Message>chiều đập</Message></Bubble>
          </Row>

          <Row $space={60}>
            <ShareButton aria-label="Chia sẻ"><ShareArrow /></ShareButton>
            <Bubble $wide>
              <Picture>
                <ChartPicture spec={monthly} />
                <HdBadge>HD</HdBadge>
              </Picture>
              <Message $caption>Nay đóng nến M, chính thức có nến đầu tiên vượt 1310 sau 3 năm</Message>
              <ReactionPill><Heart width={41} />2</ReactionPill>
              <HeartButton aria-label="Thả tim"><Heart width={47} /></HeartButton>
            </Bubble>
          </Row>

          <Row>
            <Bubble>
              <Message>Xu hướng dài hạn mạnh lên hẳn, mục tiêu tiếp theo hướng lên thân trên và râu nến vàng của nến M tháng 7/2021, biên 1412-1424</Message>
            </Bubble>
          </Row>

          <Row $space={60}>
            <ShareButton aria-label="Chia sẻ"><ShareArrow /></ShareButton>
            <Bubble $wide>
              <Picture>
                <ChartPicture spec={weekly} />
                <HdBadge>HD</HdBadge>
              </Picture>
              <Message $caption>W vẫn là 1 cây nến xanh vol mạnh, giá đóng cửa vượt luôn râu W tuần trươc</Message>
              <ReactionPill><Heart width={41} />3</ReactionPill>
            </Bubble>
          </Row>

          <Row>
            <ShareButton aria-label="Chia sẻ"><ShareArrow /></ShareButton>
            <Bubble $wide>
              <Picture>
                <ChartPicture spec={daily} />
                <HdBadge aria-label="HD" />
              </Picture>
            </Bubble>
          </Row>
        </Scroller>

        <DatePill>T6, 30/05</DatePill>
        <ScrollThumb />
        <JumpButton aria-label="Xuống cuối">
          <svg width="32" height="34" viewBox="0 0 32 34" fill="none" stroke="#7d7d7d" strokeWidth="3" strokeLinecap="round" aria-hidden="true">
            <path d="M2 2L16 16L30 2M2 18L16 32L30 18" />
          </svg>
        </JumpButton>
      </ChatArea>

      <Footer>
        <Composer onSubmit={(e) => e.preventDefault()}>
          <NavButton type="button" aria-label="Nhãn dán"><StickerIcon /></NavButton>
          <MessageInput aria-label="Tin nhắn" placeholder="Tin nhắn" />
          <NavButton type="button" aria-label="Thêm"><DotsIcon /></NavButton>
          <NavButton type="button" aria-label="Ghi âm" $gap={82}><MicIcon /></NavButton>
          <NavButton type="button" aria-label="Ảnh" $gap={100}><PhotoIcon /></NavButton>
        </Composer>
        <HomeBar />
      </Footer>
    </Phone>
  );
}
